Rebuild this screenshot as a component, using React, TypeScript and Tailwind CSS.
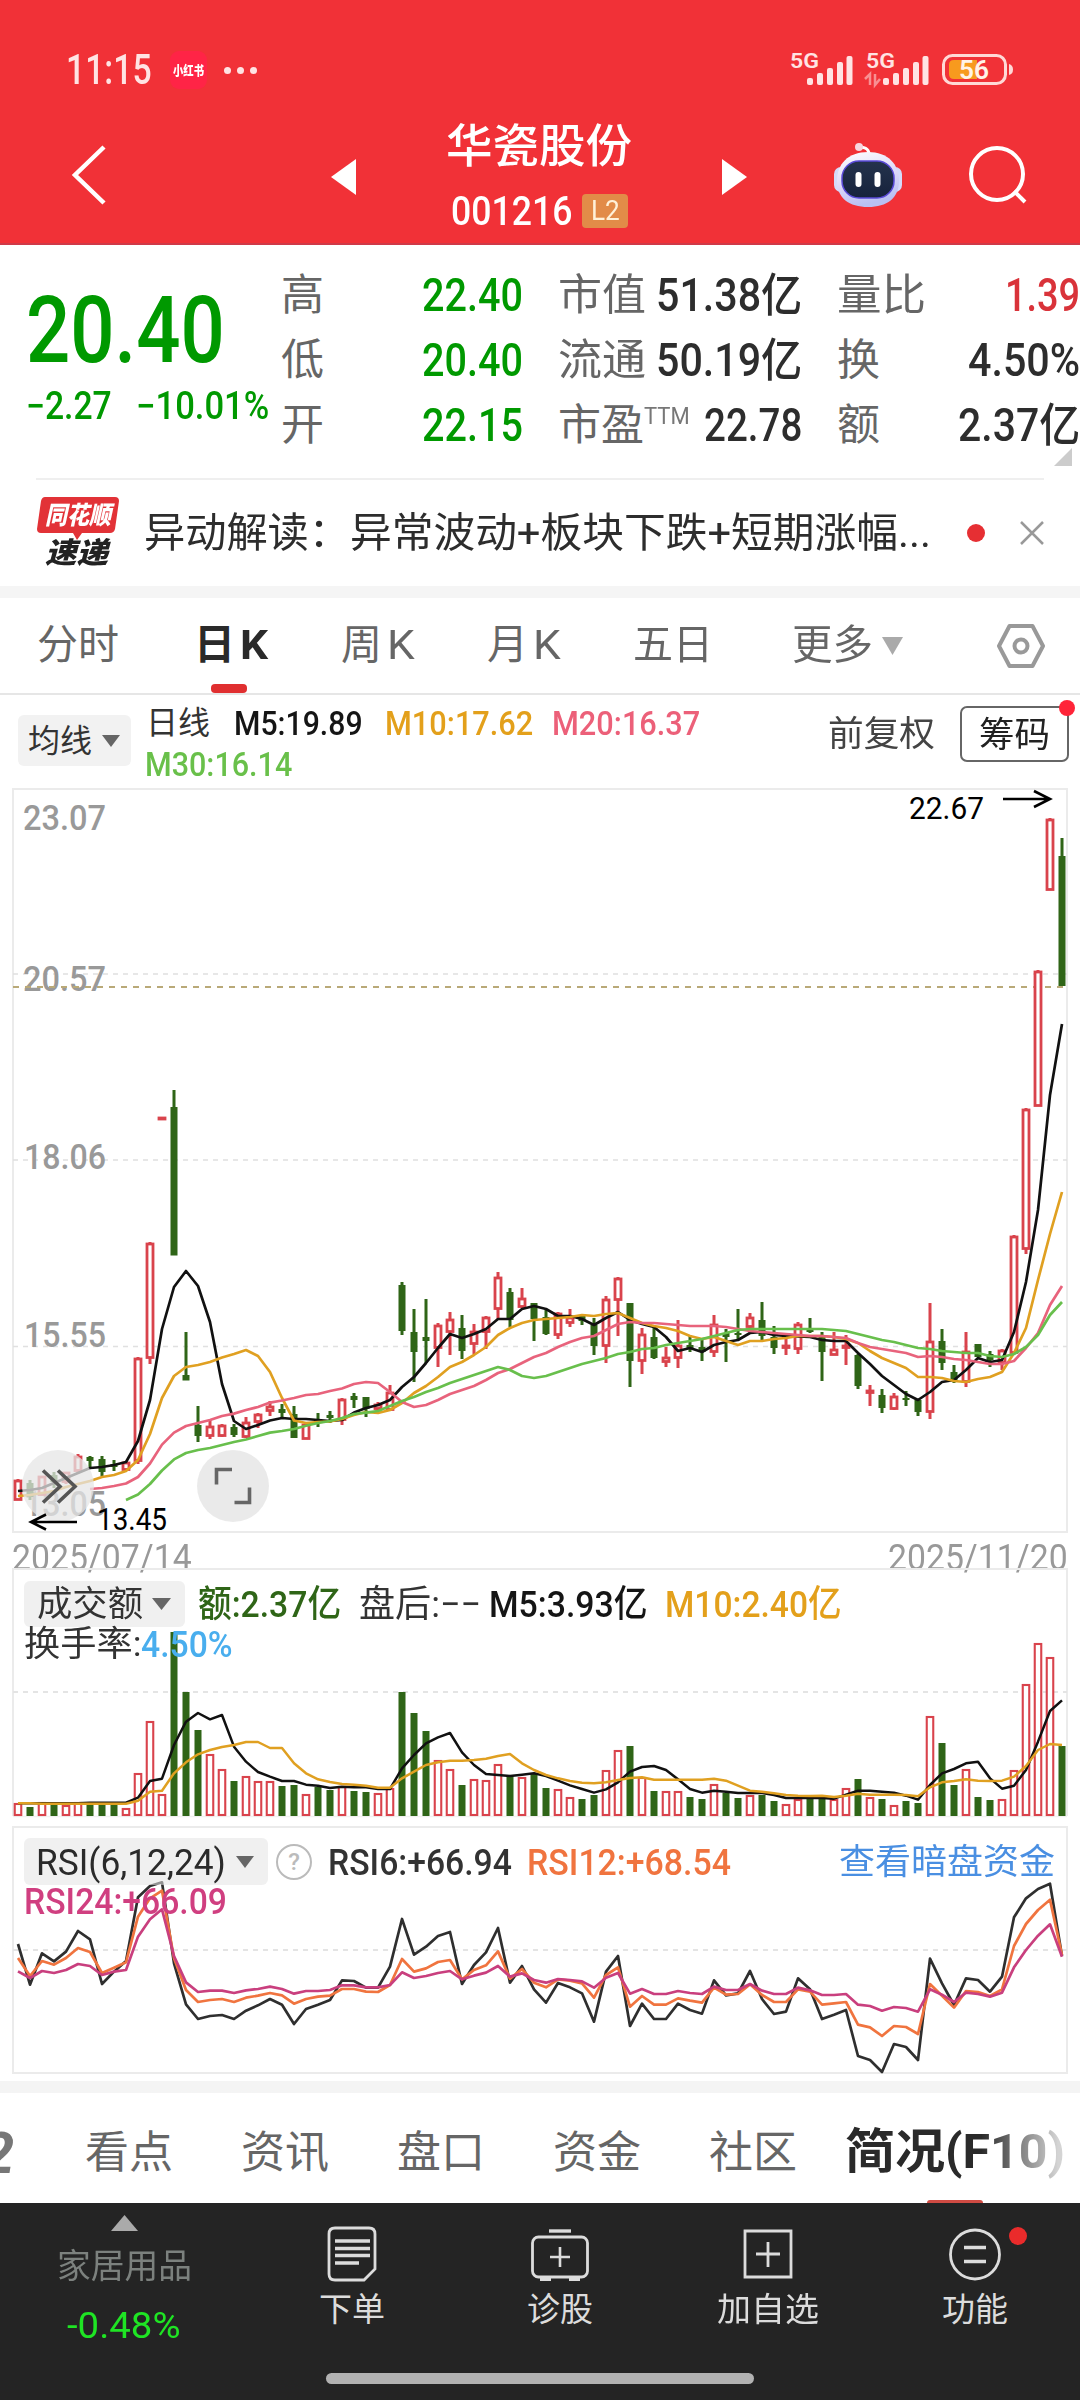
import React, { useLayoutEffect, useRef } from 'react';

const GREEN = '#2f6517';
const RED = '#d9434c';
const PITCH = 12;
const FIRST_X = 18;

// direction, body top, body bottom, high, low
type Candle = ['r' | 'g', number, number, number, number];

const candles: Candle[] = [
  ['r', 1480, 1500, 1479, 1500], ['g', 1483, 1497, 1480, 1500], ['r', 1476, 1495, 1476, 1495], ['g', 1475, 1482, 1472, 1488],
  ['r', 1472, 1482, 1472, 1484], ['r', 1456, 1471, 1454, 1473], ['g', 1457, 1461, 1456, 1468], ['g', 1459, 1472, 1456, 1476],
  ['g', 1464, 1467, 1460, 1471], ['r', 1462, 1470, 1461, 1471], ['r', 1358, 1461, 1357, 1464], ['r', 1243, 1358, 1242, 1364],
  ['r', 1117, 1119, 1117, 1119], ['g', 1107, 1255.5, 1090, 1255], ['g', 1375, 1380.5, 1332, 1380], ['g', 1425, 1436, 1406, 1442],
  ['r', 1426, 1436, 1420, 1439], ['r', 1425, 1436, 1424, 1437], ['g', 1427, 1435, 1424, 1437], ['r', 1422, 1437, 1417, 1438],
  ['r', 1414, 1422, 1413, 1428], ['r', 1406, 1411, 1401, 1416], ['g', 1409, 1413, 1404, 1418], ['g', 1414, 1438, 1406, 1438],
  ['r', 1424, 1439, 1424, 1439], ['g', 1419, 1422, 1413, 1427], ['g', 1415, 1418, 1411, 1423], ['r', 1399, 1420, 1398, 1425],
  ['g', 1396, 1400, 1393, 1408], ['g', 1397, 1409, 1397, 1417], ['r', 1404, 1409, 1402, 1411], ['r', 1392, 1410, 1385, 1411],
  ['g', 1285, 1331, 1282, 1335], ['g', 1332, 1352, 1309, 1382], ['g', 1337, 1341, 1299, 1363], ['r', 1325, 1348, 1323, 1367],
  ['r', 1319, 1332, 1312, 1355], ['g', 1328, 1351, 1315, 1359], ['r', 1331, 1344, 1324, 1354], ['r', 1317, 1332, 1316, 1349],
  ['r', 1277, 1309, 1272, 1319], ['g', 1292, 1320, 1288, 1327], ['r', 1298, 1307, 1288, 1308], ['g', 1303, 1319, 1303, 1341],
  ['g', 1317, 1334, 1310, 1335], ['r', 1313, 1335, 1312, 1339], ['r', 1317, 1323, 1309, 1327], ['g', 1316, 1321, 1314, 1325],
  ['g', 1325, 1346, 1318, 1355], ['r', 1299, 1346, 1296, 1363], ['r', 1278, 1300, 1277, 1336], ['g', 1303, 1361, 1303, 1387],
  ['r', 1334, 1361, 1328, 1374], ['g', 1337, 1358, 1327, 1359], ['r', 1357, 1362, 1347, 1367], ['r', 1345, 1358, 1320, 1368],
  ['g', 1345, 1349, 1335, 1352], ['g', 1347, 1352, 1340, 1361], ['r', 1324, 1352, 1315, 1357], ['g', 1333, 1337, 1329, 1362],
  ['g', 1333, 1335, 1309, 1339], ['r', 1317, 1327, 1313, 1328], ['g', 1320, 1336, 1302, 1340], ['g', 1337, 1348, 1326, 1354],
  ['r', 1345, 1348, 1338, 1355], ['r', 1324, 1349, 1322, 1354], ['g', 1329, 1332, 1318, 1333], ['g', 1337, 1352, 1332, 1381],
  ['r', 1349, 1355, 1332, 1355], ['r', 1345, 1348, 1335, 1365], ['g', 1355, 1386, 1354, 1389], ['r', 1390, 1393, 1385, 1406],
  ['g', 1395, 1408, 1389, 1413], ['r', 1396, 1409, 1393, 1410], ['g', 1398, 1400, 1391, 1406], ['g', 1400, 1412, 1399, 1416],
  ['r', 1341, 1412, 1303, 1419], ['g', 1341, 1363, 1329, 1370], ['g', 1372, 1380, 1365, 1383], ['r', 1351, 1382, 1332, 1387],
  ['g', 1344, 1357, 1344, 1357], ['g', 1354, 1360, 1351, 1367], ['r', 1350, 1363, 1349, 1370], ['r', 1236, 1353, 1235, 1353],
  ['r', 1109, 1249, 1108, 1254], ['r', 971, 1106, 970, 1106], ['r', 819, 890, 818, 890], ['g', 856, 986, 838, 986],
];

const ma5 = [1491, 1490, 1488, 1483, 1478, 1473, 1468, 1467, 1465, 1462, 1441, 1400, 1329, 1287, 1271, 1286, 1322, 1384, 1421, 1429, 1425, 1420.5, 1418, 1419, 1419, 1420, 1421, 1420, 1412.6, 1408, 1405, 1400, 1387, 1377, 1363, 1348, 1334, 1338, 1334, 1329, 1319, 1319, 1309, 1306, 1309, 1316, 1316, 1319, 1325, 1318, 1312, 1320, 1324, 1327, 1337, 1351, 1348, 1352, 1345, 1342, 1340, 1333, 1332, 1335, 1336, 1336.5, 1337, 1340, 1341, 1341, 1353, 1364, 1376, 1385, 1394, 1400, 1392, 1382, 1380, 1370, 1358, 1362, 1360, 1332, 1282, 1210, 1095, 1024];
const ma10 = [1496, 1495, 1493, 1491, 1487, 1484, 1481, 1477, 1475, 1471, 1460, 1434, 1398, 1376, 1367, 1365, 1362, 1357.5, 1354, 1350, 1356, 1372, 1398, 1420.5, 1423, 1422, 1421.5, 1419, 1415, 1412, 1413, 1410, 1403, 1393, 1386, 1377, 1367, 1362, 1355, 1347, 1335, 1328, 1323, 1320, 1319, 1318, 1317, 1315, 1316, 1314, 1313, 1318, 1323, 1326, 1328, 1331, 1336, 1339, 1337, 1341, 1345, 1341, 1341, 1339, 1338, 1336, 1336, 1336, 1337, 1339, 1343, 1351, 1358, 1363, 1368, 1377, 1377, 1378, 1381, 1382, 1379, 1377, 1372, 1353, 1328, 1280, 1234, 1192];
const ma20 = [1489, 1488, 1486, 1483.5, 1477, 1463.5, 1444.6, 1432.6, 1426, 1423, 1420, 1416, 1413.6, 1410, 1407, 1402.6, 1400.5, 1398, 1395, 1394, 1391, 1388.5, 1384, 1382, 1383, 1392, 1402, 1407, 1405, 1400, 1394, 1390, 1386, 1380, 1373, 1369, 1363, 1357, 1353, 1347, 1342, 1338, 1336, 1330, 1324, 1322, 1323, 1323, 1324, 1325, 1326, 1326, 1326, 1327, 1329, 1331, 1332, 1333, 1334, 1335, 1336, 1336, 1337, 1338, 1343, 1347, 1349, 1351, 1353, 1357, 1356, 1357, 1359, 1360, 1362, 1364, 1364, 1361, 1348, 1333, 1305, 1286];
const ma30 = [1500, 1494.5, 1484, 1470.5, 1459.4, 1453, 1450, 1448, 1445, 1442, 1439.5, 1436, 1432.6, 1431, 1429, 1425.7, 1423, 1421, 1418, 1414, 1412.6, 1411, 1406, 1401, 1397, 1392, 1388, 1383, 1379, 1375, 1371, 1367, 1370, 1376, 1378, 1376, 1372, 1368, 1364, 1361, 1358, 1354, 1352, 1349, 1348, 1345, 1343, 1341, 1339, 1336, 1333, 1330, 1329, 1329, 1329, 1329, 1329, 1329, 1329, 1330, 1331, 1334, 1337, 1340, 1342, 1345, 1348, 1349, 1351, 1352, 1353, 1353, 1356, 1357, 1354, 1347, 1335, 1315, 1302];

const volumes = [1803, 1807, 1802, 1805, 1805, 1802, 1805, 1805, 1805, 1808, 1773, 1721, 1794, 1632, 1692, 1730, 1754, 1769, 1781, 1776, 1781, 1781, 1786, 1785, 1794, 1787, 1790, 1786, 1791, 1792, 1793, 1788, 1692, 1713, 1731, 1760, 1769, 1785, 1779, 1780, 1764, 1776, 1777, 1774, 1788, 1789, 1797, 1799, 1795, 1770, 1750, 1746, 1777, 1791, 1791, 1791, 1797, 1799, 1784, 1793, 1798, 1795, 1795, 1801, 1804, 1799, 1799, 1799, 1799, 1788, 1779, 1797, 1799, 1805, 1801, 1803, 1716, 1743, 1785, 1769, 1797, 1800, 1799, 1770, 1684, 1643, 1657, 1746];

// indicator series are kept in thirds of a pixel
const volMa5 = [850, 850, 850, 850, 850, 850, 848, 848, 848, 848, 833, 783, 776, 675, 605, 579, 598, 585, 680, 725, 756, 770, 783, 783, 794, 797, 804, 800, 802, 802, 807, 807, 745, 705, 670, 652, 639, 697, 735, 762, 765, 768, 764, 760, 768, 782, 796, 807, 818, 808, 787, 755, 741, 738, 750, 778, 807, 818, 812, 815, 819, 819, 819, 825, 834, 834, 834, 834, 836, 824, 812, 812, 815, 818, 827, 839, 795, 760, 747, 730, 725, 775, 806, 797, 750, 665, 573, 541];
const volMa10 = [850, 850, 851, 851, 851, 851, 851, 851, 851, 851, 842, 815, 812, 760, 727, 703, 690, 681, 675, 666, 666, 684, 684, 730, 760, 778, 786, 792, 794, 797, 803, 803, 775, 755, 735, 727, 722, 722, 720, 716, 708, 702, 730, 750, 765, 775, 783, 788, 790, 787, 780, 774, 772, 779, 779, 779, 779, 779, 776, 782, 797, 812, 815, 820, 825, 827, 828, 827, 831, 827, 821, 824, 824, 824, 825, 829, 802, 787, 783, 778, 782, 783, 782, 770, 738, 690, 672, 675];
const rsi6 = [372, 494, 400, 424, 395, 333, 358, 492, 455, 423, 232, 198, 187, 430, 553, 597, 588, 585, 597, 572, 556, 537, 554, 612, 567, 554, 540, 481, 483, 503, 503, 440, 297, 404, 380, 348, 336, 492, 435, 397, 324, 488, 438, 508, 548, 489, 502, 520, 605, 455, 408, 618, 551, 597, 597, 551, 570, 581, 481, 526, 520, 453, 537, 582, 575, 475, 508, 597, 584, 570, 708, 720, 756, 672, 681, 720, 416, 490, 555, 475, 480, 515, 470, 292, 235, 207, 191, 408];
const rsi12 = [414, 468, 423, 434, 414, 384, 396, 459, 443, 427, 290, 235, 212, 415, 510, 546, 540, 537, 546, 533, 527, 519, 526, 551, 537, 530, 527, 507, 507, 515, 516, 495, 417, 455, 445, 426, 420, 478, 450, 436, 394, 476, 447, 488, 502, 478, 482, 490, 533, 465, 442, 560, 528, 554, 554, 535, 542, 548, 503, 524, 522, 493, 525, 546, 546, 508, 515, 554, 550, 546, 614, 622, 648, 618, 621, 642, 492, 527, 563, 513, 516, 528, 508, 378, 312, 270, 239, 405];
const rsi24 = [454, 474, 453, 459, 450, 432, 438, 465, 455, 450, 350, 298, 268, 408, 487, 516, 512, 512, 519, 511, 507, 500, 507, 521, 513, 513, 510, 496, 496, 502, 502, 495, 457, 474, 468, 459, 453, 478, 467, 458, 438, 470, 460, 480, 488, 477, 480, 484, 503, 473, 459, 521, 507, 522, 522, 513, 519, 522, 500, 510, 510, 492, 512, 522, 522, 503, 511, 525, 525, 522, 554, 558, 572, 561, 564, 575, 508, 524, 546, 518, 522, 530, 518, 442, 390, 347, 313, 410];

const cx = (i: number) => FIRST_X + i * PITCH;

const toPoints = (values: number[], start = 0, map = (v: number) => v) =>
  values.map((v, i) => `${cx(i + start)},${map(v)}`).join(' ');

const volY = (v: number) => 1520 + v / 3;
const rsiY = (v: number) => 1820 + v / 3;

interface FitProps {
  className: string;
  children: React.ReactNode;
}

// Squeezes one line of text to the width of its box
const Fit = ({ className, children }: FitProps) => {
  const box = useRef<HTMLDivElement>(null);
  const text = useRef<HTMLSpanElement>(null);

  useLayoutEffect(() => {
    if (!box.current || !text.current) return;
    const ratio = box.current.clientWidth / text.current.offsetWidth;
    text.current.style.transform = `scaleX(${ratio})`;
  }, []);

  return (
    <div ref={box} className={`shrink-0 whitespace-nowrap leading-none ${className}`}>
      <span ref={text} className="inline-block origin-left">
        {children}
      </span>
    </div>
  );
};

const Caret = ({ className }: { className: string }) => (
  <svg viewBox="0 0 18 12" preserveAspectRatio="none" className={`shrink-0 ${className}`}>
    <path d="M0 0H18L9 12Z" fill="currentColor" />
  </svg>
);

const Signal = () => (
  <g fill="#ffe3e3">
    <rect x="0" y="22" width="6" height="7" rx="2" />
    <rect x="10" y="17" width="6" height="12" rx="2" />
    <rect x="20" y="12" width="6" height="17" rx="2" />
    <rect x="30" y="6" width="6" height="23" rx="2" />
    <rect x="39.500" y="0" width="6" height="29" rx="2" />
  </g>
);

const StatusBar = () => (
  <div className="flex h-[116px] items-center pt-6 pl-[66px] text-[#ffe3e3]">
    <Fit className="w-[86px] text-[42px] font-medium">11:15</Fit>
    <div className="ml-[18px] flex h-[38px] w-[37px] items-center justify-center rounded-[9px] bg-[#ff2446]">
      <Fit className="w-[31px] text-[13px] font-black text-white">小红书</Fit>
    </div>
    <div className="ml-[17px] flex gap-[6px]">
      <span className="size-[7px] rounded-full bg-[#ffe3e3]" />
      <span className="size-[7px] rounded-full bg-[#ffe3e3]" />
      <span className="size-[7px] rounded-full bg-[#ffe3e3]" />
    </div>
    <svg width="226" height="40" viewBox="789 50 226 40" className="ml-[532px]">
      <text x="790" y="67.500" fontSize="21" fontWeight="600" textLength="29" lengthAdjust="spacingAndGlyphs" fill="#ffe3e3">5G</text>
      <g transform="translate(807 56)"><Signal /></g>
      <text x="866" y="67.500" fontSize="21" fontWeight="600" textLength="29" lengthAdjust="spacingAndGlyphs" fill="#ffe3e3">5G</text>
      <g transform="translate(883 56)"><Signal /></g>
      <path d="M865 79L870 74V85M880 79L875 85V74" fill="none" stroke="#f88f92" strokeWidth="2.500" />
      <rect x="943.500" y="55.500" width="62" height="28" rx="9" fill="none" stroke="#ffd9d6" strokeWidth="3" />
      <path d="M954 60H977V79H954Q949 79 949 74V65Q949 60 954 60Z" fill="#f79a1e" />
      <path d="M1009 64Q1013 65 1013 69.500T1009 75Z" fill="#ffd9d6" />
      <text x="959" y="78.500" fontSize="25" fontWeight="600" textLength="30" lengthAdjust="spacingAndGlyphs" fill="#fff3e8">56</text>
    </svg>
  </div>
);

const Robot = () => (
  <svg width="72" height="68" viewBox="834 141 72 68" className="ml-[85px]">
    <defs>
      <linearGradient id="shell" x1="0" y1="0" x2="0.300" y2="1">
        <stop offset="0" stopColor="#ffffff" />
        <stop offset="0.600" stopColor="#dcd7f8" />
        <stop offset="1" stopColor="#b9c0f2" />
      </linearGradient>
      <linearGradient id="visor" x1="0" y1="0" x2="0" y2="1">
        <stop offset="0" stopColor="#24324c" />
        <stop offset="1" stopColor="#16233c" />
      </linearGradient>
    </defs>
    <path d="M871 156Q872 147 861 147" fill="none" stroke="#fff" strokeWidth="3" />
    <circle cx="861" cy="147" r="4" fill="#f7d6df" />
    <rect x="836" y="167" width="68" height="25" rx="7" fill="#d5dafa" />
    <path d="M870 152C890 152 901 164 901 181C901 198 889 207 870 207S839 198 839 181C839 164 850 152 870 152Z" fill="url(#shell)" />
    <rect x="844" y="161" width="52" height="37" rx="17" fill="url(#visor)" stroke="#5a4bd8" strokeWidth="1.500" />
    <rect x="857.500" y="172" width="6" height="15" rx="3" fill="#fff" />
    <rect x="876.500" y="172" width="6" height="15" rx="3" fill="#fff" />
  </svg>
);

const Header = () => (
  <header className="h-[245px] border-b-2 border-[#cf3a48] bg-[#f13137] text-white">
    <StatusBar />
    <div className="flex h-[118px] items-center">
      <svg width="40" height="64" viewBox="70 143 40 64" className="ml-[70px]">
        <path d="M104 147L75 175L104 203" fill="none" stroke="#fff" strokeWidth="4.500" />
      </svg>
      <svg width="25" height="36" viewBox="0 0 25 36" className="mt-[4px] ml-[221px]">
        <path d="M25 0V36L0 18Z" fill="#fff" />
      </svg>
      <div className="ml-[90px] h-[118px] w-[186px]">
        <Fit className="h-[58px] w-[186px] pt-[7px] text-[46px] font-medium">华瓷股份</Fit>
        <div className="flex h-[60px] items-center pt-[14px] pl-[5px]">
          <Fit className="mt-[2px] w-[121px] text-[40px] font-medium">001216</Fit>
          <div className="ml-[10px] flex h-[34px] w-[46px] items-center justify-center rounded-[4px] bg-[#e28b48]">
            <Fit className="w-[29px] text-[28px] text-[#fff1d8]">L2</Fit>
          </div>
        </div>
      </div>
      <svg width="25" height="36" viewBox="0 0 25 36" className="mt-[4px] ml-[90px]">
        <path d="M0 0V36L25 18Z" fill="#fff" />
      </svg>
      <Robot />
      <svg width="64" height="64" viewBox="967 145 64 64" className="ml-[62px]">
        <circle cx="998" cy="176" r="26" fill="none" stroke="#fff" strokeWidth="4" />
        <path d="M1015 193L1026 204" stroke="#fff" strokeWidth="4" />
      </svg>
    </div>
  </header>
);

const labelCls = 'mt-[3px] text-[43px] leading-none text-[#666]';
const rowCls = 'flex h-[65px] items-center justify-between';

const Quote = () => (
  <section className="flex h-[233px] pt-[16px]">
    <div className="w-[281px] pl-[26px] text-[#090]">
      <Fit className="mt-[24px] w-[199px] text-[92px] font-medium">20.40</Fit>
      <div className="mt-[10px] flex">
        <Fit className="w-[86px] text-[38px] font-medium">−2.27</Fit>
        <Fit className="ml-[24px] w-[133px] text-[38px] font-medium">−10.01%</Fit>
      </div>
    </div>
    <div className="w-[242px] text-[#090]">
      <div className={rowCls}><span className={labelCls}>高</span><Fit className="mt-[2px] w-[101px] text-[47px] font-medium">22.40</Fit></div>
      <div className={rowCls}><span className={labelCls}>低</span><Fit className="mt-[2px] w-[101px] text-[47px] font-medium">20.40</Fit></div>
      <div className={rowCls}><span className={labelCls}>开</span><Fit className="mt-[2px] w-[101px] text-[47px] font-medium">22.15</Fit></div>
    </div>
    <div className="ml-[35px] w-[244px] text-[#2d2d2d]">
      <div className={rowCls}>
        <Fit className="mt-[3px] w-[88px] text-[43px] text-[#666]">市值</Fit>
        <Fit className="mt-[2px] w-[146px] text-[46px] font-medium">51.38亿</Fit>
      </div>
      <div className={rowCls}>
        <Fit className="mt-[3px] w-[88px] text-[43px] text-[#666]">流通</Fit>
        <Fit className="mt-[2px] w-[146px] text-[46px] font-medium">50.19亿</Fit>
      </div>
      <div className={rowCls}>
        <div className="flex items-start">
          <span className={labelCls}>市盈</span>
          <Fit className="mt-[4px] w-[46px] text-[23px] text-[#777]">TTM</Fit>
        </div>
        <Fit className="mt-[2px] w-[98px] text-[46px] font-medium">22.78</Fit>
      </div>
    </div>
    <div className="ml-[35px] w-[243px] text-[#2d2d2d]">
      <div className={rowCls}>
        <Fit className="mt-[3px] w-[89px] text-[43px] text-[#666]">量比</Fit>
        <Fit className="mt-[2px] w-[75px] text-[47px] font-medium text-[#d9333a]">1.39</Fit>
      </div>
      <div className={rowCls}><span className={labelCls}>换</span><Fit className="mt-[2px] w-[112px] text-[46px] font-medium">4.50%</Fit></div>
      <div className={rowCls}><span className={labelCls}>额</span><Fit className="mt-[2px] w-[122px] text-[46px] font-medium">2.37亿</Fit></div>
      <svg width="18" height="18" viewBox="0 0 18 18" className="-mt-[8px] ml-[217px]">
        <path d="M18 0V18H0Z" fill="#ccc" />
      </svg>
    </div>
  </section>
);

const News = () => (
  <section className="mx-[36px] flex h-[108px] items-center border-t-2 border-[#efefef]">
    <div className="relative h-[72px] w-[84px]">
      <svg width="84" height="44" viewBox="0 0 84 44" className="absolute top-0 left-0">
        <path d="M9 0H79Q83 0 83 4L79 32Q78 36 74 36H46L41 43L37 36H5Q1 36 1 32L5 4Q6 0 9 0Z" fill="#e23237" />
      </svg>
      <Fit className="absolute top-[6px] left-[9px] w-[66px] text-[25px] font-black text-white italic">同花顺</Fit>
      <Fit className="absolute top-[42px] left-[9px] w-[63px] text-[29px] font-black text-[#222] italic">速递</Fit>
    </div>
    <Fit className="ml-[24px] w-[206px] text-[41px] text-[#2d2d2d]">异动解读：</Fit>
    <Fit className="w-[581px] text-[41px] text-[#2d2d2d]">异常波动+板块下跌+短期涨幅...</Fit>
    <span className="ml-[36px] size-[18px] rounded-full bg-[#e62f33]" />
    <svg width="24" height="24" viewBox="0 0 24 24" className="ml-[35px]">
      <path d="M1 1L23 23M23 1L1 23" stroke="#999" strokeWidth="2.500" />
    </svg>
  </section>
);

const PeriodTabs = () => (
  <nav className="flex h-[97px] items-center border-b-2 border-[#e6e6e6] text-[41px] leading-none text-[#666]">
    <Fit className="ml-[37px] w-[82px]">分时</Fit>
    <div className="relative ml-[75px] flex h-full items-center">
      <Fit className="w-[41px] font-bold text-[#2a2a2a]">日</Fit>
      <Fit className="ml-[5px] w-[28px] font-bold text-[#2a2a2a]">K</Fit>
      <span className="absolute bottom-0 left-[17px] h-[9px] w-[36px] rounded-[4px] bg-[#e02f30]" />
    </div>
    <Fit className="ml-[73px] w-[41px]">周</Fit>
    <Fit className="ml-[5px] w-[28px]">K</Fit>
    <Fit className="ml-[72px] w-[41px]">月</Fit>
    <Fit className="ml-[5px] w-[28px]">K</Fit>
    <Fit className="ml-[72px] w-[80px]">五日</Fit>
    <Fit className="ml-[79px] w-[81px]">更多</Fit>
    <Caret className="ml-[9px] h-[18px] w-[21px] text-[#aaa]" />
    <svg width="48" height="46" viewBox="0 0 48 46" className="ml-[94px]">
      <path d="M12.500 3H35.500L46 23L35.500 43H12.500L2 23Z" fill="none" stroke="#999" strokeWidth="4" strokeLinejoin="round" />
      <circle cx="24" cy="23" r="6.500" fill="none" stroke="#999" strokeWidth="4" />
    </svg>
  </nav>
);

const MaLegend = () => (
  <div className="flex h-[93px] text-[33px]">
    <div className="mt-[20px] ml-[18px] flex h-[51px] w-[113px] items-center rounded-[6px] bg-[#f2f2f2] pl-[10px]">
      <Fit className="w-[64px] text-[32px] text-[#333]">均线</Fit>
      <Caret className="ml-[10px] h-[12px] w-[18px] text-[#666]" />
    </div>
    <div className="mt-[12px] ml-[15px] w-[570px]">
      <div className="flex h-[41px]">
        <Fit className="w-[64px] text-[32px] text-[#333]">日线</Fit>
        <Fit className="ml-[24px] w-[129px] font-medium text-[#151515]">M5:19.89</Fit>
        <Fit className="ml-[22px] w-[148px] font-medium text-[#e3a01b]">M10:17.62</Fit>
        <Fit className="ml-[19px] w-[148px] font-medium text-[#ec6079]">M20:16.37</Fit>
      </div>
      <Fit className="-ml-[1px] w-[147px] font-medium text-[#69c04a]">M30:16.14</Fit>
    </div>
    <Fit className="mt-[22px] ml-[112px] w-[107px] text-[35px] text-[#444]">前复权</Fit>
    <div className="relative mt-[11px] ml-[25px] flex h-[56px] w-[109px] items-center justify-center rounded-[7px] border-2 border-[#666]">
      <Fit className="mt-[2px] w-[71px] text-[35px] text-[#222]">筹码</Fit>
      <span className="absolute -top-[8px] -right-[8px] size-[16px] rounded-full bg-[#ff2438]" />
    </div>
  </div>
);

const AxisText = ({ x, y, w, size, fill, children }: { x: number; y: number; w: number; size: number; fill: string; children: string }) => (
  <text x={x} y={y} fontSize={size} fill={fill} textLength={w} lengthAdjust="spacingAndGlyphs" fontWeight={fill === '#000' ? 400 : 500}>
    {children}
  </text>
);

const KChart = () => (
  <svg width="1080" height="748" viewBox="0 786 1080 748" className="block">
    <rect x="13" y="789" width="1054" height="743" fill="none" stroke="#ebebeb" strokeWidth="2" />
    <path d="M13 974H1067M13 1160H1067M13 1346.500H1067" stroke="#e0e0e0" strokeWidth="1.500" strokeDasharray="5 5" />

    {/* Price scale */}
    <AxisText x={23} y={829.5} w={83} size={35} fill="#999">23.07</AxisText>
    <AxisText x={23} y={990.5} w={83} size={35} fill="#999">20.57</AxisText>
    <AxisText x={24} y={1169} w={82} size={35} fill="#999">18.06</AxisText>
    <AxisText x={24} y={1346.5} w={82} size={35} fill="#999">15.55</AxisText>
    <AxisText x={24} y={1515.5} w={82} size={35} fill="#999">13.05</AxisText>
    <path d="M13 987H1063" stroke="#b9a978" strokeWidth="1.800" strokeDasharray="6 6" />

    {candles.map(([dir, top, bottom, high, low], i) =>
      dir === 'g' ? (
        <g key={i} fill={GREEN}>
          <rect x={cx(i) - 1.5} y={high} width="3" height={low - high} />
          <rect x={cx(i) - 3.5} y={top} width="7" height={bottom - top} />
        </g>
      ) : (
        <g key={i}>
          <rect x={cx(i) - 1.5} y={high} width="3" height={low - high} fill={RED} />
          <rect x={cx(i) - 3} y={top + 1} width="6" height={Math.max(bottom - top - 1.5, 1)} fill="#fff" stroke={RED} strokeWidth="2.800" />
        </g>
      ),
    )}

    <g fill="none" strokeWidth="2.700" strokeLinejoin="round">
      <polyline points={toPoints(ma5)} stroke="#111" />
      <polyline points={toPoints(ma10)} stroke="#e0a021" />
      <polyline points={toPoints(ma20, 6)} stroke="#e8637c" />
      <polyline points={toPoints(ma30, 9)} stroke="#68bf4c" />
    </g>

    {/* Floating buttons */}
    <circle cx="58" cy="1486" r="36" fill="#e6e6e6" fillOpacity="0.750" />
    <path d="M43 1470.500L60 1486.500L43 1502.500M58 1470.500L75 1486.500L58 1502.500" fill="none" stroke="#555" strokeWidth="3.600" />
    <circle cx="233" cy="1486" r="36" fill="#e6e6e6" fillOpacity="0.850" />
    <path d="M232 1469.500H216.500V1484.500M249.500 1487.500V1502.500H234.500" fill="none" stroke="#666" strokeWidth="3.600" />

    {/* High and low marks */}
    <AxisText x={909} y={818.5} w={75} size={31} fill="#000">22.67</AxisText>
    <path d="M1003 799H1050M1034 791L1050 799L1034 807" fill="none" stroke="#000" strokeWidth="2.600" />
    <AxisText x={97} y={1529.5} w={70} size={31} fill="#000">13.45</AxisText>
    <path d="M77 1522H31M46 1514.500L31 1522L46 1529.500" fill="none" stroke="#000" strokeWidth="2.600" />
  </svg>
);

const VolumeChart = () => (
  <div className="relative h-[258px]">
    <svg width="1080" height="258" viewBox="0 1568 1080 258" className="block">
      <path d="M13 1816V1569H1067V1816" fill="none" stroke="#ebebeb" strokeWidth="2" />
      <path d="M13 1816.500H1067" stroke="#f1f1f1" strokeWidth="1.500" />
      <path d="M13 1692H1067" stroke="#e4e4e4" strokeWidth="2" strokeDasharray="5 5" />
      {volumes.map((top, i) =>
        candles[i][0] === 'g' ? (
          <rect key={i} x={cx(i) - 3.5} y={top} width="7" height={1816 - top} fill={GREEN} />
        ) : (
          <rect key={i} x={cx(i) - 3.25} y={top + 1} width="6.500" height={1814 - top} fill="#fff" stroke={RED} strokeWidth="2.100" />
        ),
      )}
      <g fill="none" strokeWidth="2.500" strokeLinejoin="round">
        <polyline points={toPoints(volMa5, 0, volY)} stroke="#111" />
        <polyline points={toPoints(volMa10, 0, volY)} stroke="#e0a021" />
      </g>
    </svg>
    <div className="absolute top-[13px] left-[24px] text-[37px]">
      <div className="flex h-[46px] items-center font-medium">
        <div className="flex h-[46px] w-[161px] items-center rounded-[6px] bg-[#e4e4e4]/55 pl-[13px] font-normal">
          <Fit className="w-[106px] text-[35px] text-[#333]">成交额</Fit>
          <Caret className="ml-[9px] h-[12px] w-[19px] text-[#666]" />
        </div>
        <Fit className="mt-[1px] ml-[13px] w-[143px] text-[#2f6517]">额:2.37亿</Fit>
        <Fit className="mt-[1px] ml-[18px] w-[122px] font-normal text-[#333]">盘后:−−</Fit>
        <Fit className="mt-[1px] ml-[8px] w-[159px] text-[#151515]">M5:3.93亿</Fit>
        <Fit className="mt-[1px] ml-[17px] w-[177px] text-[#e3a01b]">M10:2.40亿</Fit>
      </div>
      <div className="flex h-[34px] items-center">
        <Fit className="w-[117px] text-[35px] text-[#333]">换手率:</Fit>
        <Fit className="w-[92px] font-medium text-[#49aeee]">4.50%</Fit>
      </div>
    </div>
  </div>
);

const RsiChart = () => (
  <div className="relative h-[255px]">
    <svg width="1080" height="255" viewBox="0 1826 1080 255" className="block">
      <rect x="13" y="1827" width="1054" height="246" fill="none" stroke="#ebebeb" strokeWidth="2" />
      <path d="M13 1950H1067" stroke="#e4e4e4" strokeWidth="2" strokeDasharray="5 5" />
      <g fill="none" strokeWidth="2.700" strokeLinejoin="round">
        <polyline points={toPoints(rsi6, 0, rsiY)} stroke="#2f2f2f" />
        <polyline points={toPoints(rsi12, 0, rsiY)} stroke="#f0743f" />
        <polyline points={toPoints(rsi24, 0, rsiY)} stroke="#c93f7e" />
      </g>
    </svg>
    <div className="absolute top-[12px] left-[24px] text-[37px] font-medium">
      <div className="flex h-[47px] items-center">
        <div className="flex h-[47px] w-[244px] items-center rounded-[6px] bg-[#e4e4e4]/55 pl-[12px]">
          <Fit className="mt-[2px] w-[190px] font-normal text-[#2a2a2a]">RSI(6,12,24)</Fit>
          <Caret className="ml-[10px] h-[12px] w-[18px] text-[#666]" />
        </div>
        <div className="ml-[8px] flex size-[36px] items-center justify-center rounded-full border-[2.5px] border-[#bbb] text-[24px] leading-none text-[#bbb]">
          ?
        </div>
        <Fit className="mt-[2px] ml-[16px] w-[184px] text-[#333]">RSI6:+66.94</Fit>
        <Fit className="mt-[2px] ml-[15px] w-[204px] text-[#f0743f]">RSI12:+68.54</Fit>
        <Fit className="mt-[2px] ml-[108px] w-[216px] text-[35px] font-normal text-[#4a8fe2]">查看暗盘资金</Fit>
      </div>
      <Fit className="mt-[-2px] w-[203px] text-[#d03f80]">RSI24:+66.09</Fit>
    </div>
  </div>
);

const infoTabs = ['看点', '资讯', '盘口', '资金', '社区'];

const InfoTabs = () => (
  <nav className="flex h-[110px] items-center overflow-hidden text-[44px] leading-none text-[#666]">
    <div className="mt-[9px] flex w-[85px]">
      <span className="-ml-[18px] text-[58px] font-bold text-[#777] italic">2</span>
    </div>
    {infoTabs.map((tab) => (
      <span key={tab} className="mt-[9px] w-[156px]">{tab}</span>
    ))}
    <div className="relative -ml-[20px] flex h-full items-center">
      <div className="mt-[8px] [mask-image:linear-gradient(to_right,black_62%,rgba(0,0,0,0.2)_97%)]">
        <Fit className="w-[220px] py-2 text-[48px] font-bold text-[#2a2a2a]">简况(F10)</Fit>
      </div>
      <span className="absolute bottom-0 left-[82px] h-[3px] w-[56px] rounded-t-[3px] bg-[#d04b43]" />
    </div>
  </nav>
);

const Footer = () => (
  <footer className="h-[197px] bg-[#242424] text-[#dcdcdc]">
    <div className="flex h-[150px]">
      <div className="ml-[56px] flex w-[136px] flex-col items-center pt-[12px]">
        <svg width="27" height="16" viewBox="0 0 27 16">
          <path d="M13.500 0L27 16H0Z" fill="#aaa" />
        </svg>
        <Fit className="mt-[18px] w-[135px] text-[34px] text-[#7c817e]">家居用品</Fit>
        <Fit className="mt-[25px] w-[114px] text-[36px] text-[#1fe424]">-0.48%</Fit>
      </div>

      <div className="ml-[127px] flex w-[66px] flex-col items-center pt-[23px]">
        <svg width="50" height="56" viewBox="0 0 50 56" fill="none" stroke="#dcdcdc" strokeWidth="2.800">
          <path d="M8 2H42Q48 2 48 8V43L37 54H8Q2 54 2 48V8Q2 2 8 2Z" />
          <path d="M8 15H43M8 22.500H43M8 29.500H43M8 37H32" strokeWidth="3.400" />
        </svg>
        <Fit className="mt-[11px] w-[66px] text-[33px]">下单</Fit>
      </div>

      <div className="ml-[142px] flex w-[66px] flex-col items-center pt-[23px]">
        <svg width="60" height="56" viewBox="0 0 60 56" fill="none" stroke="#dcdcdc" strokeWidth="2.800">
          <path d="M19 5H41" strokeWidth="3.400" />
          <rect x="2.500" y="11" width="55" height="40" rx="6" />
          <path d="M20 31H40M30 21V41" strokeWidth="2.600" />
          <path d="M10 53.500H21M39 53.500H50" strokeWidth="3" />
        </svg>
        <Fit className="mt-[11px] w-[66px] text-[33px]">诊股</Fit>
      </div>

      <div className="ml-[124px] flex w-[102px] flex-col items-center pt-[23px]">
        <svg width="50" height="56" viewBox="0 0 50 56" fill="none" stroke="#dcdcdc" strokeWidth="2.800">
          <path d="M2 5H48V51H2ZM13 28H37M25 16V41" />
        </svg>
        <Fit className="mt-[11px] w-[102px] text-[33px]">加自选</Fit>
      </div>

      <div className="relative ml-[123px] flex w-[66px] flex-col items-center pt-[23px]">
        <svg width="54" height="56" viewBox="0 0 54 56" fill="none" stroke="#dcdcdc" strokeWidth="2.800">
          <circle cx="27" cy="28.500" r="24.500" />
          <path d="M16 21.500H38M16 35.500H38" strokeWidth="3.400" />
        </svg>
        <span className="absolute top-[24px] left-[67px] size-[18px] rounded-full bg-[#ea2b2b]" />
        <Fit className="mt-[11px] w-[66px] text-[33px]">功能</Fit>
      </div>
    </div>
    <div className="mx-auto mt-[20px] h-[11px] w-[428px] rounded-full bg-[#b2b2b2]" />
  </footer>
);

const App = () => (
  <div className="h-[2400px] w-[1080px] overflow-hidden bg-white font-[Roboto,'Noto_Sans_CJK_SC',sans-serif]">
    <Header />
    <Quote />
    <News />
    <div className="h-[12px] bg-[#f5f5f5]" />
    <PeriodTabs />
    <MaLegend />
    <div className="-mt-[2px]">
      <KChart />
    </div>
    <div className="flex h-[34px] items-center justify-between px-[12px] pt-[13px] text-[36px] text-[#999]">
      <Fit className="w-[180px]">2025/07/14</Fit>
      <Fit className="w-[180px]">2025/11/20</Fit>
    </div>
    <VolumeChart />
    <RsiChart />
    <div className="h-[12px] bg-[#f4f4f4]" />
    <InfoTabs />
    <Footer />
  </div>
);

export default App;
